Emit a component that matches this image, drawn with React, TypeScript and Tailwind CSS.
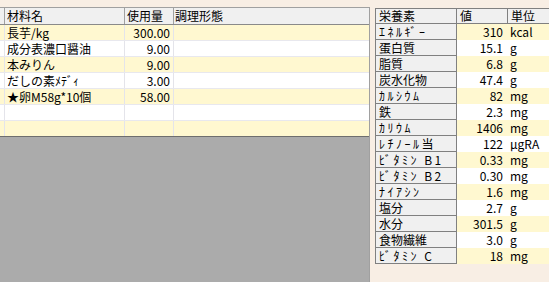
import React from 'react';

const ingredients = [
  { name: '長芋/kg', amount: '300.00' },
  { name: '成分表濃口醤油', amount: '9.00' },
  { name: '本みりん', amount: '9.00' },
  { name: 'だしの素ﾒﾃﾞｨ', amount: '3.00' },
  { name: '★卵M58g*10個', amount: '58.00' },
  { name: '', amount: '' },
  { name: '', amount: '' },
];

const nutrients = [
  { name: 'ｴﾈﾙｷﾞｰ', value: '310', unit: 'kcal' },
  { name: '蛋白質', value: '15.1', unit: 'g' },
  { name: '脂質', value: '6.8', unit: 'g' },
  { name: '炭水化物', value: '47.4', unit: 'g' },
  { name: 'ｶﾙｼｳﾑ', value: '82', unit: 'mg' },
  { name: '鉄', value: '2.3', unit: 'mg' },
  { name: 'ｶﾘｳﾑ', value: '1406', unit: 'mg' },
  { name: 'ﾚﾁﾉｰﾙ当', value: '122', unit: 'μgRA' },
  { name: 'ﾋﾞﾀﾐﾝ B1', value: '0.33', unit: 'mg' },
  { name: 'ﾋﾞﾀﾐﾝ B2', value: '0.30', unit: 'mg' },
  { name: 'ﾅｲｱｼﾝ', value: '1.6', unit: 'mg' },
  { name: '塩分', value: '2.7', unit: 'g' },
  { name: '水分', value: '301.5', unit: 'g' },
  { name: '食物繊維', value: '3.0', unit: 'g' },
  { name: 'ﾋﾞﾀﾐﾝ C', value: '18', unit: 'mg' },
];

const font = "font-['Noto_Sans_CJK_JP','Noto_Sans',sans-serif]";

// half-width katakana are drawn narrow by Noto, spread them a little
const isHalfKana = (s: string) => /[\uFF61-\uFF9F]/.test(s);

const IngredientGrid: React.FC = () => (
  <div className="w-[370px] h-full flex flex-col border-t border-r border-[#a0a0a0] bg-[#ababab]">
    <div className="flex h-[17px] bg-[#f0f0f0] border-b border-[#8a8a8a] text-[12px] leading-[16px] text-black">
      <div className="w-[5px] border-r border-[#a0a0a0]" />
      <div className="w-[120px] border-r border-[#a0a0a0] pl-[2px]">材料名</div>
      <div className="w-[49px] border-r border-[#a0a0a0] pl-[2px]">使用量</div>
      <div className="flex-1 pl-[1px]">調理形態</div>
    </div>
    {ingredients.map((row, i) => (
      <div
        key={i}
        className={`flex h-[16px] text-[12px] leading-[15px] text-black border-b ${
          i === ingredients.length - 1 ? 'border-[#6e6e6e]' : 'border-[#e8e8ee]'
        } ${i % 2 === 0 ? 'bg-[#fff8d0]' : 'bg-white'}`}
      >
        <div className="w-[5px] border-r border-[#e4e4ea]" />
        <div className="w-[120px] border-r border-[#e4e4ea] pl-[2px] whitespace-nowrap">{row.name}</div>
        <div className="w-[49px] border-r border-[#e4e4ea] pr-[3px] text-right">{row.amount}</div>
        <div className="flex-1" />
      </div>
    ))}
    <div className="flex-1" />
  </div>
);

const NutrientGrid: React.FC = () => (
  <div className="ml-[5px] mt-[1px] w-[174px] overflow-hidden text-[12px] leading-[15px] text-black">
    <div className="flex h-[16px] bg-[#f0f0f0] border-t border-b border-l border-[#808080] leading-[14px]">
      <div className="w-[81px] shrink-0 border-r border-[#808080] pl-[3px]">栄養素</div>
      <div className="w-[51px] shrink-0 border-r border-[#808080] pl-[3px]">値</div>
      <div className="w-[60px] shrink-0 pl-[3px]">単位</div>
    </div>
    {nutrients.map((row, i) => (
      <div key={row.name} className="flex h-[16px]">
        <div
          className={`w-[82px] shrink-0 bg-[#f0f0f0] border-l border-r border-b border-[#808080] pl-[3px] whitespace-nowrap ${
            isHalfKana(row.name) ? 'tracking-[2.5px]' : ''
          }`}
        >
          {row.name}
        </div>
        <div className={`flex flex-1 ${i % 2 === 0 ? 'bg-[#fff8d0]' : 'bg-white'}`}>
          <div className="w-[50px] shrink-0 text-right pr-[4px]">{row.value}</div>
          <div className="flex-1 pl-[3px] whitespace-nowrap">{row.unit}</div>
        </div>
      </div>
    ))}
  </div>
);

export default function App() {
  return (
    <div className={`w-[549px] h-[282px] overflow-hidden bg-[#f8eee4] flex pt-[7px] ${font}`}>
      <IngredientGrid />
      <NutrientGrid />
    </div>
  );
}
